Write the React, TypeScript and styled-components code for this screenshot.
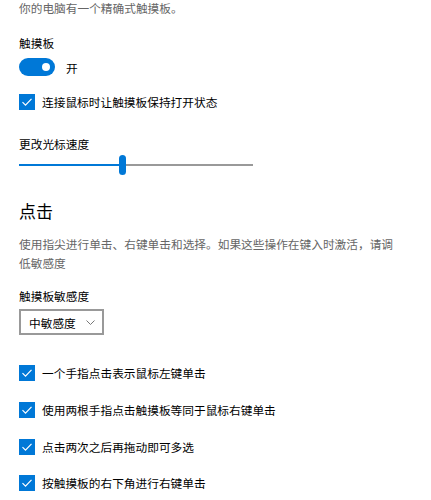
import React from "react";
import styled, { createGlobalStyle } from "styled-components";

const Global = createGlobalStyle`
  html, body { margin: 0; padding: 0; background: #ffffff; }
  body { font-family: "Noto Sans CJK SC", "Noto Sans", sans-serif; color: #000; }
`;

const Page = styled.div`
  display: flex;
  flex-direction: column;
  align-items: flex-start;
  padding: 0 0 0 19px;
  width: 431px;
  height: 500px;
  box-sizing: border-box;
  overflow: hidden;
`;

const Note = styled.div`
  font-size: 11.7px;
  line-height: 15px;
  color: #666666;
`;

const Label = styled.div<{ $mt: number }>`
  font-size: 11.7px;
  line-height: 16px;
  color: #000;
  margin-top: ${(p) => p.$mt}px;
`;

const ToggleRow = styled.div`
  display: flex;
  align-items: center;
  gap: 11px;
  margin-top: 7px;
  height: 18px;
  font-size: 11.7px;
`;

const Toggle = styled.div`
  width: 36px;
  height: 18px;
  border-radius: 9px;
  background: #0078d7;
  position: relative;
  box-sizing: border-box;
`;

const Knob = styled.span`
  position: absolute;
  right: 5px;
  top: 5px;
  width: 8px;
  height: 8px;
  border-radius: 50%;
  background: #fff;
`;

const CheckRow = styled.label<{ $mt: number }>`
  display: flex;
  align-items: center;
  gap: 7px;
  height: 16px;
  margin-top: ${(p) => p.$mt}px;
  font-size: 11.7px;
  line-height: 16px;
  color: #000;
  white-space: nowrap;
`;

const Box = styled.span`
  width: 16px;
  height: 16px;
  background: #0078d7;
  display: flex;
  align-items: center;
  justify-content: center;
  flex: none;
`;

const SliderWrap = styled.div`
  position: relative;
  width: 234px;
  height: 20px;
  margin-top: 3px;
`;

const Track = styled.div`
  position: absolute;
  left: 0;
  right: 0;
  top: 9px;
  height: 2px;
  background: #999999;
`;

const Fill = styled.div`
  position: absolute;
  left: 0;
  top: 9px;
  height: 2px;
  background: #0078d7;
`;

const Thumb = styled.div`
  position: absolute;
  top: 0;
  width: 7px;
  height: 20px;
  border-radius: 4px;
  background: #0078d7;
`;

const Heading = styled.div`
  font-size: 17px;
  line-height: 24px;
  margin-top: 24px;
  color: #000;
`;

const Desc = styled.div`
  font-size: 11.7px;
  line-height: 19px;
  color: #666666;
  max-width: 380px;
  margin-top: 11px;
`;

const Select = styled.div`
  margin-top: 5px;
  height: 26px;
  box-sizing: border-box;
  border: 2px solid #999999;
  display: flex;
  align-items: center;
  padding: 0 7px 0 8px;
  gap: 10px;
  font-size: 11.7px;
  color: #000;
  white-space: nowrap;
`;

const Check = () => (
  <Box>
    <svg width="12" height="12" viewBox="0 0 12 12">
      <polyline points="1.5,6.2 4.5,9.2 10.5,2.8" fill="none" stroke="#fff" strokeWidth="1.2" />
    </svg>
  </Box>
);

const Chevron = () => (
  <svg width="9" height="5" viewBox="0 0 9 5">
    <polyline points="0.5,0.5 4.5,4.5 8.5,0.5" fill="none" stroke="#777" strokeWidth="1" />
  </svg>
);

const value = 0.44;

export default function App() {
  return (
    <>
      <Global />
      <Page>
        <Note>你的电脑有一个精确式触摸板。</Note>
        <Label $mt={20}>触摸板</Label>
        <ToggleRow>
          <Toggle>
            <Knob />
          </Toggle>
          <span>开</span>
        </ToggleRow>
        <CheckRow $mt={18}>
          <Check />
          连接鼠标时让触摸板保持打开状态
        </CheckRow>
        <Label $mt={26}>更改光标速度</Label>
        <SliderWrap>
          <Track />
          <Fill style={{ width: `${value * 234}px` }} />
          <Thumb style={{ left: `${value * 234 - 3}px` }} />
        </SliderWrap>
        <Heading>点击</Heading>
        <Desc>使用指尖进行单击、右键单击和选择。如果这些操作在键入时激活，请调低敏感度</Desc>
        <Label $mt={16}>触摸板敏感度</Label>
        <Select>
          中敏感度
          <Chevron />
        </Select>
        <CheckRow $mt={30}>
          <Check />
          一个手指点击表示鼠标左键单击
        </CheckRow>
        <CheckRow $mt={21}>
          <Check />
          使用两根手指点击触摸板等同于鼠标右键单击
        </CheckRow>
        <CheckRow $mt={21}>
          <Check />
          点击两次之后再拖动即可多选
        </CheckRow>
        <CheckRow $mt={20}>
          <Check />
          按触摸板的右下角进行右键单击
        </CheckRow>
      </Page>
    </>
  );
}
